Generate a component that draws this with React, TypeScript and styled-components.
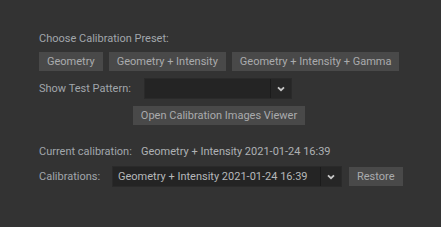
import React from "react";
import styled, { createGlobalStyle } from "styled-components";

const Global = createGlobalStyle`
  html, body { margin: 0; padding: 0; background: #333333; }
  body { font-family: Roboto, "Liberation Sans", sans-serif; }
`;

const Page = styled.div`
  width: 441px;
  height: 227px;
  background: #333333;
  box-sizing: border-box;
  padding: 31px 0 0 39px;
  font-size: 11px;
  color: #a1a6ab;
`;

const Panel = styled.div`
  width: 362px;
  display: flex;
  flex-direction: column;
`;

const Label = styled.div<{ $w?: number; $light?: boolean }>`
  height: 16px;
  line-height: 16px;
  white-space: nowrap;
  flex: none;
  width: ${(p) => (p.$w ? `${p.$w}px` : "auto")};
  color: ${(p) => (p.$light ? "#aeb1b4" : "inherit")};
`;

const Row = styled.div<{ $gap?: number; $mt?: number }>`
  display: flex;
  align-items: center;
  gap: ${(p) => p.$gap ?? 6}px;
  margin-top: ${(p) => p.$mt ?? 0}px;
`;

const Button = styled.button`
  flex: none;
  height: 19px;
  padding: 0 8px;
  border: none;
  background: #494949;
  color: #a9abad;
  font-family: Roboto, "Liberation Sans", sans-serif;
  font-size: 11px;
  line-height: 19px;
  white-space: nowrap;
  cursor: pointer;
`;

const CenterRow = styled.div`
  display: flex;
  justify-content: center;
  margin-top: 7px;
  padding-right: 2px;
`;

const Select = styled.div<{ $w: number }>`
  flex: none;
  width: ${(p) => p.$w}px;
  height: 21px;
  display: flex;
  background: #242424;
  box-sizing: border-box;
  border: 1px solid #2a2a2a;
`;

const SelectValue = styled.div`
  flex: 1;
  padding-left: 5px;
  line-height: 19px;
  color: #b6b8ba;
  white-space: nowrap;
  overflow: hidden;
`;

const Arrow = styled.div`
  width: 20px;
  border-left: 1px solid #1b1b1b;
  background: #262626;
  display: flex;
  align-items: center;
  justify-content: center;
`;

const Chevron = () => (
  <svg width="8" height="6" viewBox="0 0 8 6">
    <path d="M1 1.3 L4 4.2 L7 1.3" stroke="#c8c8c8" strokeWidth="1.8" fill="none" />
  </svg>
);

export default function App() {
  return (
    <>
      <Global />
      <Page>
        <Panel>
          <Label>Choose Calibration Preset:</Label>
          <Row $mt={5}>
            <Button>Geometry</Button>
            <Button>Geometry + Intensity</Button>
            <Button>Geometry + Intensity + Gamma</Button>
          </Row>
          <Row $mt={7} $gap={0}>
            <Label $w={104.5}>Show Test Pattern:</Label>
            <Select $w={148}>
              <SelectValue />
              <Arrow>
                <Chevron />
              </Arrow>
            </Select>
          </Row>
          <CenterRow>
            <Button>Open Calibration Images Viewer</Button>
          </CenterRow>
          <Row $mt={19} $gap={0}>
            <Label $w={102}>Current calibration:</Label>
            <Label $light>Geometry + Intensity 2021-01-24 16:39</Label>
          </Row>
          <Row $mt={6} $gap={7}>
            <Label $w={66}>Calibrations:</Label>
            <Select $w={230}>
              <SelectValue>Geometry + Intensity 2021-01-24 16:39</SelectValue>
              <Arrow>
                <Chevron />
              </Arrow>
            </Select>
            <Button>Restore</Button>
          </Row>
        </Panel>
      </Page>
    </>
  );
}
